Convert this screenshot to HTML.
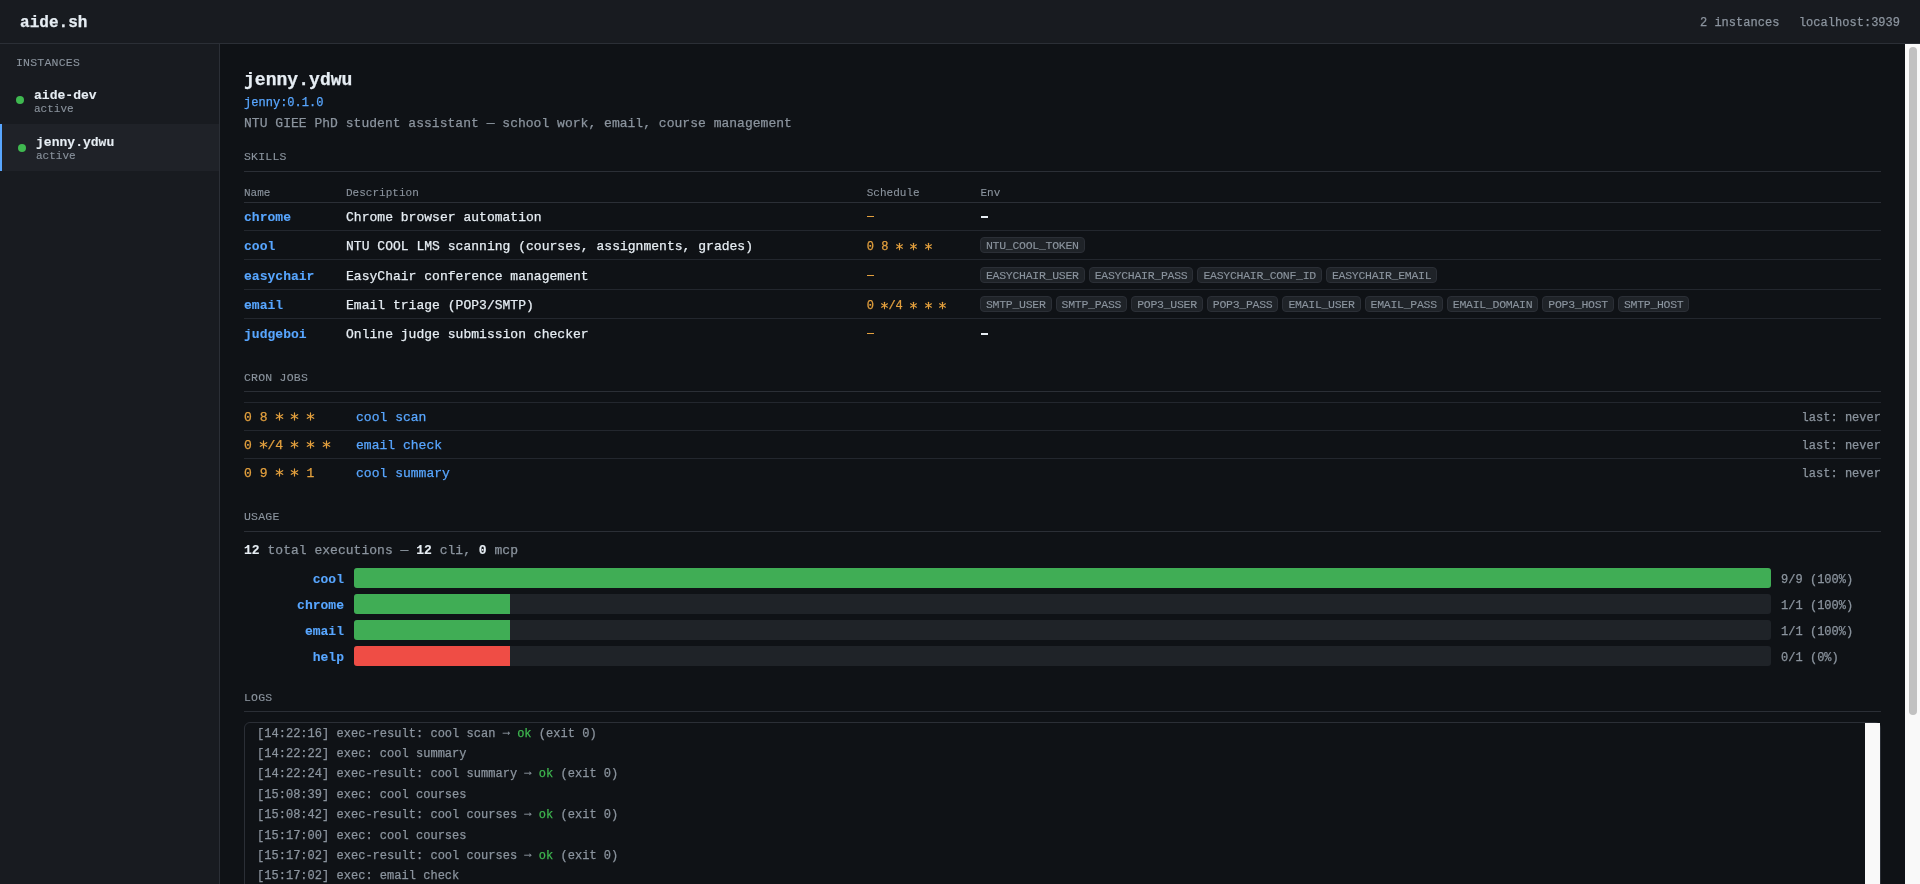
<!DOCTYPE html>
<html><head><meta charset="utf-8">
<style>
*{box-sizing:border-box;margin:0;padding:0}
html,body{width:1920px;height:884px;overflow:hidden;background:#0f1216;color:#e6edf3;font-family:"Liberation Mono",monospace;}
#w{position:absolute;left:0;top:0;width:1920px;height:884px;overflow:hidden;will-change:transform}
.t{position:absolute;white-space:pre;}
.r{position:absolute;}
.ha{color:transparent;-webkit-text-stroke-color:transparent}
.tag{position:absolute;height:16px;border:1px solid #2b2f36;border-radius:4px;background:#1f2328;}
b{font-weight:bold}
</style></head><body><div id="w">
<div class="r" style="left:0px;top:0px;width:1920px;height:43px;background:#181b20;"></div>
<div class="r" style="left:0px;top:43px;width:1920px;height:1px;background:#2b2f36;"></div>
<div class="t" style="top:15px;font-size:16.00px;line-height:16px;letter-spacing:0.031px;color:#e6edf3;-webkit-text-stroke:0.25px #e6edf3;font-weight:bold;left:20px;">aide.sh</div>
<div class="t" style="top:17px;font-size:12.00px;line-height:12px;letter-spacing:0.024px;color:#8b949e;-webkit-text-stroke:0.25px #8b949e;right:140.58px;">2 instances</div>
<div class="t" style="top:17px;font-size:12.00px;line-height:12px;letter-spacing:0.024px;color:#8b949e;-webkit-text-stroke:0.25px #8b949e;right:19.98px;">localhost:3939</div>
<div class="r" style="left:0px;top:44px;width:219px;height:840px;background:#181b20;"></div>
<div class="r" style="left:219px;top:44px;width:1px;height:840px;background:#2b2f36;"></div>
<div class="t" style="top:57px;font-size:11.50px;line-height:12px;letter-spacing:0.221px;color:#8b949e;-webkit-text-stroke:0.1px #8b949e;left:16px;">INSTANCES</div>
<div class="r" style="left:16px;top:96px;width:8px;height:8px;background:#3fb950;border-radius:50%;"></div>
<div class="t" style="top:89px;font-size:13.00px;line-height:13px;letter-spacing:0.026px;color:#e6edf3;-webkit-text-stroke:0.1px #e6edf3;font-weight:bold;left:34px;">aide-dev</div>
<div class="t" style="top:104px;font-size:11.00px;line-height:11px;letter-spacing:0.021px;color:#8b949e;-webkit-text-stroke:0.1px #8b949e;left:34px;">active</div>
<div class="r" style="left:0px;top:124px;width:219px;height:47px;background:#1f2228;"></div>
<div class="r" style="left:0px;top:124px;width:2px;height:47px;background:#58a6ff;"></div>
<div class="r" style="left:18px;top:144px;width:8px;height:8px;background:#3fb950;border-radius:50%;"></div>
<div class="t" style="top:136px;font-size:13.00px;line-height:13px;letter-spacing:0.026px;color:#e6edf3;-webkit-text-stroke:0.1px #e6edf3;font-weight:bold;left:36px;">jenny.ydwu</div>
<div class="t" style="top:151px;font-size:11.00px;line-height:11px;letter-spacing:0.021px;color:#8b949e;-webkit-text-stroke:0.1px #8b949e;left:36px;">active</div>
<div class="t" style="top:71px;font-size:18.00px;line-height:18px;letter-spacing:0.038px;color:#e6edf3;-webkit-text-stroke:0.25px #e6edf3;font-weight:bold;left:244px;">jenny.ydwu</div>
<div class="t" style="top:97px;font-size:12.00px;line-height:12px;letter-spacing:0.024px;color:#58a6ff;-webkit-text-stroke:0.25px #58a6ff;left:244px;">jenny:0.1.0</div>
<div class="t" style="top:117px;font-size:13.00px;line-height:13px;letter-spacing:0.026px;color:#8b949e;-webkit-text-stroke:0.25px #8b949e;left:244px;">NTU GIEE PhD student assistant — school work, email, course management</div>
<div class="t" style="top:151px;font-size:11.50px;line-height:12px;letter-spacing:0.221px;color:#8b949e;-webkit-text-stroke:0.1px #8b949e;left:244px;">SKILLS</div>
<div class="r" style="left:244px;top:171px;width:1637px;height:1px;background:#2b2f36;"></div>
<div class="t" style="top:188px;font-size:11.00px;line-height:11px;letter-spacing:0.021px;color:#8b949e;-webkit-text-stroke:0.1px #8b949e;left:244px;">Name</div>
<div class="t" style="top:188px;font-size:11.00px;line-height:11px;letter-spacing:0.021px;color:#8b949e;-webkit-text-stroke:0.1px #8b949e;left:346px;">Description</div>
<div class="t" style="top:188px;font-size:11.00px;line-height:11px;letter-spacing:0.021px;color:#8b949e;-webkit-text-stroke:0.1px #8b949e;left:866.7px;">Schedule</div>
<div class="t" style="top:188px;font-size:11.00px;line-height:11px;letter-spacing:0.021px;color:#8b949e;-webkit-text-stroke:0.1px #8b949e;left:980.4px;">Env</div>
<div class="r" style="left:244px;top:202px;width:1637px;height:1px;background:#2b2f36;"></div>
<div class="t" style="top:211px;font-size:13.00px;line-height:13px;letter-spacing:0.026px;color:#58a6ff;-webkit-text-stroke:0.1px #58a6ff;font-weight:bold;left:244px;">chrome</div>
<div class="t" style="top:211px;font-size:13.00px;line-height:13px;letter-spacing:0.026px;color:#e6edf3;-webkit-text-stroke:0.25px #e6edf3;left:346px;">Chrome browser automation</div>
<div class="r" style="left:866.7px;top:216px;width:7px;height:1.2px;background:#e3a03e;"></div>
<div class="r" style="left:980.5px;top:216px;width:7.5px;height:2px;background:#e6edf3;"></div>
<div class="r" style="left:244px;top:230px;width:1637px;height:1px;background:#23272e;"></div>
<div class="t" style="top:240px;font-size:13.00px;line-height:13px;letter-spacing:0.026px;color:#58a6ff;-webkit-text-stroke:0.1px #58a6ff;font-weight:bold;left:244px;">cool</div>
<div class="t" style="top:240px;font-size:13.00px;line-height:13px;letter-spacing:0.026px;color:#e6edf3;-webkit-text-stroke:0.25px #e6edf3;left:346px;">NTU COOL LMS scanning (courses, assignments, grades)</div>
<div class="t" style="top:241px;font-size:12.00px;line-height:12px;letter-spacing:0.024px;color:#e3a03e;-webkit-text-stroke:0.25px #e3a03e;left:866.7px;">0 8 <span class="ha">*</span> <span class="ha">*</span> <span class="ha">*</span></div>
<svg class="r" style="left:893px;top:240px" width="13" height="13" viewBox="0 0 13 13"><g stroke="#e3a03e" stroke-width="1.1" stroke-linecap="round"><line x1="6.50" y1="3.20" x2="6.50" y2="9.80"/><line x1="3.56" y1="4.80" x2="9.44" y2="8.20"/><line x1="9.44" y1="4.80" x2="3.56" y2="8.20"/></g></svg>
<svg class="r" style="left:907px;top:240px" width="13" height="13" viewBox="0 0 13 13"><g stroke="#e3a03e" stroke-width="1.1" stroke-linecap="round"><line x1="6.50" y1="3.20" x2="6.50" y2="9.80"/><line x1="3.56" y1="4.80" x2="9.44" y2="8.20"/><line x1="9.44" y1="4.80" x2="3.56" y2="8.20"/></g></svg>
<svg class="r" style="left:922px;top:240px" width="13" height="13" viewBox="0 0 13 13"><g stroke="#e3a03e" stroke-width="1.1" stroke-linecap="round"><line x1="6.50" y1="3.20" x2="6.50" y2="9.80"/><line x1="3.56" y1="4.80" x2="9.44" y2="8.20"/><line x1="9.44" y1="4.80" x2="3.56" y2="8.20"/></g></svg>
<div class="tag" style="left:980.00px;top:237px;width:104.71px;"></div>
<div class="t" style="top:240px;font-size:11.50px;line-height:12px;letter-spacing:-0.279px;color:#8b949e;-webkit-text-stroke:0.1px #8b949e;left:986px;">NTU_COOL_TOKEN</div>
<div class="r" style="left:244px;top:259px;width:1637px;height:1px;background:#23272e;"></div>
<div class="t" style="top:269.5px;font-size:13.00px;line-height:13px;letter-spacing:0.026px;color:#58a6ff;-webkit-text-stroke:0.1px #58a6ff;font-weight:bold;left:244px;">easychair</div>
<div class="t" style="top:269.5px;font-size:13.00px;line-height:13px;letter-spacing:0.026px;color:#e6edf3;-webkit-text-stroke:0.25px #e6edf3;left:346px;">EasyChair conference management</div>
<div class="r" style="left:866.7px;top:274.5px;width:7px;height:1.2px;background:#e3a03e;"></div>
<div class="tag" style="left:980.00px;top:266.5px;width:104.71px;"></div>
<div class="t" style="top:269.5px;font-size:11.50px;line-height:12px;letter-spacing:-0.279px;color:#8b949e;-webkit-text-stroke:0.1px #8b949e;left:986px;">EASYCHAIR_USER</div>
<div class="tag" style="left:1088.71px;top:266.5px;width:104.71px;"></div>
<div class="t" style="top:269.5px;font-size:11.50px;line-height:12px;letter-spacing:-0.279px;color:#8b949e;-webkit-text-stroke:0.1px #8b949e;left:1094.708px;">EASYCHAIR_PASS</div>
<div class="tag" style="left:1197.42px;top:266.5px;width:124.57px;"></div>
<div class="t" style="top:269.5px;font-size:11.50px;line-height:12px;letter-spacing:-0.279px;color:#8b949e;-webkit-text-stroke:0.1px #8b949e;left:1203.4160000000002px;">EASYCHAIR_CONF_ID</div>
<div class="tag" style="left:1325.99px;top:266.5px;width:111.33px;"></div>
<div class="t" style="top:269.5px;font-size:11.50px;line-height:12px;letter-spacing:-0.279px;color:#8b949e;-webkit-text-stroke:0.1px #8b949e;left:1331.9900000000002px;">EASYCHAIR_EMAIL</div>
<div class="r" style="left:244px;top:289px;width:1637px;height:1px;background:#23272e;"></div>
<div class="t" style="top:299px;font-size:13.00px;line-height:13px;letter-spacing:0.026px;color:#58a6ff;-webkit-text-stroke:0.1px #58a6ff;font-weight:bold;left:244px;">email</div>
<div class="t" style="top:299px;font-size:13.00px;line-height:13px;letter-spacing:0.026px;color:#e6edf3;-webkit-text-stroke:0.25px #e6edf3;left:346px;">Email triage (POP3/SMTP)</div>
<div class="t" style="top:300px;font-size:12.00px;line-height:12px;letter-spacing:0.024px;color:#e3a03e;-webkit-text-stroke:0.25px #e3a03e;left:866.7px;">0 <span class="ha">*</span>/4 <span class="ha">*</span> <span class="ha">*</span> <span class="ha">*</span></div>
<svg class="r" style="left:878px;top:299px" width="13" height="13" viewBox="0 0 13 13"><g stroke="#e3a03e" stroke-width="1.1" stroke-linecap="round"><line x1="6.50" y1="3.20" x2="6.50" y2="9.80"/><line x1="3.56" y1="4.80" x2="9.44" y2="8.20"/><line x1="9.44" y1="4.80" x2="3.56" y2="8.20"/></g></svg>
<svg class="r" style="left:907px;top:299px" width="13" height="13" viewBox="0 0 13 13"><g stroke="#e3a03e" stroke-width="1.1" stroke-linecap="round"><line x1="6.50" y1="3.20" x2="6.50" y2="9.80"/><line x1="3.56" y1="4.80" x2="9.44" y2="8.20"/><line x1="9.44" y1="4.80" x2="3.56" y2="8.20"/></g></svg>
<svg class="r" style="left:922px;top:299px" width="13" height="13" viewBox="0 0 13 13"><g stroke="#e3a03e" stroke-width="1.1" stroke-linecap="round"><line x1="6.50" y1="3.20" x2="6.50" y2="9.80"/><line x1="3.56" y1="4.80" x2="9.44" y2="8.20"/><line x1="9.44" y1="4.80" x2="3.56" y2="8.20"/></g></svg>
<svg class="r" style="left:936px;top:299px" width="13" height="13" viewBox="0 0 13 13"><g stroke="#e3a03e" stroke-width="1.1" stroke-linecap="round"><line x1="6.50" y1="3.20" x2="6.50" y2="9.80"/><line x1="3.56" y1="4.80" x2="9.44" y2="8.20"/><line x1="9.44" y1="4.80" x2="3.56" y2="8.20"/></g></svg>
<div class="tag" style="left:980.00px;top:296px;width:71.60px;"></div>
<div class="t" style="top:299px;font-size:11.50px;line-height:12px;letter-spacing:-0.279px;color:#8b949e;-webkit-text-stroke:0.1px #8b949e;left:986px;">SMTP_USER</div>
<div class="tag" style="left:1055.60px;top:296px;width:71.60px;"></div>
<div class="t" style="top:299px;font-size:11.50px;line-height:12px;letter-spacing:-0.279px;color:#8b949e;-webkit-text-stroke:0.1px #8b949e;left:1061.598px;">SMTP_PASS</div>
<div class="tag" style="left:1131.20px;top:296px;width:71.60px;"></div>
<div class="t" style="top:299px;font-size:11.50px;line-height:12px;letter-spacing:-0.279px;color:#8b949e;-webkit-text-stroke:0.1px #8b949e;left:1137.196px;">POP3_USER</div>
<div class="tag" style="left:1206.79px;top:296px;width:71.60px;"></div>
<div class="t" style="top:299px;font-size:11.50px;line-height:12px;letter-spacing:-0.279px;color:#8b949e;-webkit-text-stroke:0.1px #8b949e;left:1212.7939999999999px;">POP3_PASS</div>
<div class="tag" style="left:1282.39px;top:296px;width:78.22px;"></div>
<div class="t" style="top:299px;font-size:11.50px;line-height:12px;letter-spacing:-0.279px;color:#8b949e;-webkit-text-stroke:0.1px #8b949e;left:1288.3919999999998px;">EMAIL_USER</div>
<div class="tag" style="left:1364.61px;top:296px;width:78.22px;"></div>
<div class="t" style="top:299px;font-size:11.50px;line-height:12px;letter-spacing:-0.279px;color:#8b949e;-webkit-text-stroke:0.1px #8b949e;left:1370.6119999999999px;">EMAIL_PASS</div>
<div class="tag" style="left:1446.83px;top:296px;width:91.46px;"></div>
<div class="t" style="top:299px;font-size:11.50px;line-height:12px;letter-spacing:-0.279px;color:#8b949e;-webkit-text-stroke:0.1px #8b949e;left:1452.8319999999999px;">EMAIL_DOMAIN</div>
<div class="tag" style="left:1542.30px;top:296px;width:71.60px;"></div>
<div class="t" style="top:299px;font-size:11.50px;line-height:12px;letter-spacing:-0.279px;color:#8b949e;-webkit-text-stroke:0.1px #8b949e;left:1548.2959999999998px;">POP3_HOST</div>
<div class="tag" style="left:1617.89px;top:296px;width:71.60px;"></div>
<div class="t" style="top:299px;font-size:11.50px;line-height:12px;letter-spacing:-0.279px;color:#8b949e;-webkit-text-stroke:0.1px #8b949e;left:1623.8939999999998px;">SMTP_HOST</div>
<div class="r" style="left:244px;top:318px;width:1637px;height:1px;background:#23272e;"></div>
<div class="t" style="top:328px;font-size:13.00px;line-height:13px;letter-spacing:0.026px;color:#58a6ff;-webkit-text-stroke:0.1px #58a6ff;font-weight:bold;left:244px;">judgeboi</div>
<div class="t" style="top:328px;font-size:13.00px;line-height:13px;letter-spacing:0.026px;color:#e6edf3;-webkit-text-stroke:0.25px #e6edf3;left:346px;">Online judge submission checker</div>
<div class="r" style="left:866.7px;top:333px;width:7px;height:1.2px;background:#e3a03e;"></div>
<div class="r" style="left:980.5px;top:333px;width:7.5px;height:2px;background:#e6edf3;"></div>
<div class="t" style="top:372px;font-size:11.50px;line-height:12px;letter-spacing:0.221px;color:#8b949e;-webkit-text-stroke:0.1px #8b949e;left:244px;">CRON JOBS</div>
<div class="r" style="left:244px;top:391px;width:1637px;height:1px;background:#2b2f36;"></div>
<div class="r" style="left:244px;top:402px;width:1637px;height:1px;background:#23272e;"></div>
<div class="t" style="top:411px;font-size:13.00px;line-height:13px;letter-spacing:0.026px;color:#e3a03e;-webkit-text-stroke:0.25px #e3a03e;left:244px;">0 8 <span class="ha">*</span> <span class="ha">*</span> <span class="ha">*</span></div>
<svg class="r" style="left:273px;top:410px" width="13" height="13" viewBox="0 0 13 13"><g stroke="#e3a03e" stroke-width="1.1916666666666667" stroke-linecap="round"><line x1="6.50" y1="2.93" x2="6.50" y2="10.07"/><line x1="3.31" y1="4.66" x2="9.69" y2="8.34"/><line x1="9.69" y1="4.66" x2="3.31" y2="8.34"/></g></svg>
<svg class="r" style="left:288px;top:410px" width="13" height="13" viewBox="0 0 13 13"><g stroke="#e3a03e" stroke-width="1.1916666666666667" stroke-linecap="round"><line x1="6.50" y1="2.93" x2="6.50" y2="10.07"/><line x1="3.31" y1="4.66" x2="9.69" y2="8.34"/><line x1="9.69" y1="4.66" x2="3.31" y2="8.34"/></g></svg>
<svg class="r" style="left:304px;top:410px" width="13" height="13" viewBox="0 0 13 13"><g stroke="#e3a03e" stroke-width="1.1916666666666667" stroke-linecap="round"><line x1="6.50" y1="2.93" x2="6.50" y2="10.07"/><line x1="3.31" y1="4.66" x2="9.69" y2="8.34"/><line x1="9.69" y1="4.66" x2="3.31" y2="8.34"/></g></svg>
<div class="t" style="top:411px;font-size:13.00px;line-height:13px;letter-spacing:0.026px;color:#58a6ff;-webkit-text-stroke:0.25px #58a6ff;left:356px;">cool scan</div>
<div class="t" style="top:412px;font-size:12.00px;line-height:12px;letter-spacing:0.024px;color:#8b949e;-webkit-text-stroke:0.25px #8b949e;right:38.98px;">last: never</div>
<div class="r" style="left:244px;top:430px;width:1637px;height:1px;background:#23272e;"></div>
<div class="t" style="top:439px;font-size:13.00px;line-height:13px;letter-spacing:0.026px;color:#e3a03e;-webkit-text-stroke:0.25px #e3a03e;left:244px;">0 <span class="ha">*</span>/4 <span class="ha">*</span> <span class="ha">*</span> <span class="ha">*</span></div>
<svg class="r" style="left:257px;top:438px" width="13" height="13" viewBox="0 0 13 13"><g stroke="#e3a03e" stroke-width="1.1916666666666667" stroke-linecap="round"><line x1="6.50" y1="2.93" x2="6.50" y2="10.07"/><line x1="3.31" y1="4.66" x2="9.69" y2="8.34"/><line x1="9.69" y1="4.66" x2="3.31" y2="8.34"/></g></svg>
<svg class="r" style="left:288px;top:438px" width="13" height="13" viewBox="0 0 13 13"><g stroke="#e3a03e" stroke-width="1.1916666666666667" stroke-linecap="round"><line x1="6.50" y1="2.93" x2="6.50" y2="10.07"/><line x1="3.31" y1="4.66" x2="9.69" y2="8.34"/><line x1="9.69" y1="4.66" x2="3.31" y2="8.34"/></g></svg>
<svg class="r" style="left:304px;top:438px" width="13" height="13" viewBox="0 0 13 13"><g stroke="#e3a03e" stroke-width="1.1916666666666667" stroke-linecap="round"><line x1="6.50" y1="2.93" x2="6.50" y2="10.07"/><line x1="3.31" y1="4.66" x2="9.69" y2="8.34"/><line x1="9.69" y1="4.66" x2="3.31" y2="8.34"/></g></svg>
<svg class="r" style="left:320px;top:438px" width="13" height="13" viewBox="0 0 13 13"><g stroke="#e3a03e" stroke-width="1.1916666666666667" stroke-linecap="round"><line x1="6.50" y1="2.93" x2="6.50" y2="10.07"/><line x1="3.31" y1="4.66" x2="9.69" y2="8.34"/><line x1="9.69" y1="4.66" x2="3.31" y2="8.34"/></g></svg>
<div class="t" style="top:439px;font-size:13.00px;line-height:13px;letter-spacing:0.026px;color:#58a6ff;-webkit-text-stroke:0.25px #58a6ff;left:356px;">email check</div>
<div class="t" style="top:440px;font-size:12.00px;line-height:12px;letter-spacing:0.024px;color:#8b949e;-webkit-text-stroke:0.25px #8b949e;right:38.98px;">last: never</div>
<div class="r" style="left:244px;top:458px;width:1637px;height:1px;background:#23272e;"></div>
<div class="t" style="top:467px;font-size:13.00px;line-height:13px;letter-spacing:0.026px;color:#e3a03e;-webkit-text-stroke:0.25px #e3a03e;left:244px;">0 9 <span class="ha">*</span> <span class="ha">*</span> 1</div>
<svg class="r" style="left:273px;top:466px" width="13" height="13" viewBox="0 0 13 13"><g stroke="#e3a03e" stroke-width="1.1916666666666667" stroke-linecap="round"><line x1="6.50" y1="2.93" x2="6.50" y2="10.07"/><line x1="3.31" y1="4.66" x2="9.69" y2="8.34"/><line x1="9.69" y1="4.66" x2="3.31" y2="8.34"/></g></svg>
<svg class="r" style="left:288px;top:466px" width="13" height="13" viewBox="0 0 13 13"><g stroke="#e3a03e" stroke-width="1.1916666666666667" stroke-linecap="round"><line x1="6.50" y1="2.93" x2="6.50" y2="10.07"/><line x1="3.31" y1="4.66" x2="9.69" y2="8.34"/><line x1="9.69" y1="4.66" x2="3.31" y2="8.34"/></g></svg>
<div class="t" style="top:467px;font-size:13.00px;line-height:13px;letter-spacing:0.026px;color:#58a6ff;-webkit-text-stroke:0.25px #58a6ff;left:356px;">cool summary</div>
<div class="t" style="top:468px;font-size:12.00px;line-height:12px;letter-spacing:0.024px;color:#8b949e;-webkit-text-stroke:0.25px #8b949e;right:38.98px;">last: never</div>
<div class="t" style="top:511px;font-size:11.50px;line-height:12px;letter-spacing:0.221px;color:#8b949e;-webkit-text-stroke:0.1px #8b949e;left:244px;">USAGE</div>
<div class="r" style="left:244px;top:531px;width:1637px;height:1px;background:#2b2f36;"></div>
<div class="t" style="left:244px;top:544px;font-size:13px;line-height:13px;color:#8b949e;letter-spacing:0.026px;-webkit-text-stroke:0.25px #8b949e"><b style="color:#e6edf3;-webkit-text-stroke:0.1px #e6edf3">12</b> total executions — <b style="color:#e6edf3;-webkit-text-stroke:0.1px #e6edf3">12</b> cli, <b style="color:#e6edf3;-webkit-text-stroke:0.1px #e6edf3">0</b> mcp</div>
<div class="r" style="left:354px;top:568px;width:1417px;height:20px;background:#1f2328;border-radius:3px;"></div>
<div class="r" style="left:354px;top:568px;width:1417.0px;height:20px;background:#40ad55;border-radius:3px;"></div>
<div class="t" style="top:573px;font-size:13.00px;line-height:13px;letter-spacing:0.026px;color:#58a6ff;-webkit-text-stroke:0.1px #58a6ff;font-weight:bold;right:1575.97px;">cool</div>
<div class="t" style="top:574px;font-size:12.00px;line-height:12px;letter-spacing:0.024px;color:#8b949e;-webkit-text-stroke:0.25px #8b949e;left:1781px;">9/9 (100%)</div>
<div class="r" style="left:354px;top:594px;width:1417px;height:20px;background:#1f2328;border-radius:3px;"></div>
<div class="r" style="left:354px;top:594px;width:155.9px;height:20px;background:#40ad55;border-radius:3px 0 0 3px;"></div>
<div class="t" style="top:599px;font-size:13.00px;line-height:13px;letter-spacing:0.026px;color:#58a6ff;-webkit-text-stroke:0.1px #58a6ff;font-weight:bold;right:1575.97px;">chrome</div>
<div class="t" style="top:600px;font-size:12.00px;line-height:12px;letter-spacing:0.024px;color:#8b949e;-webkit-text-stroke:0.25px #8b949e;left:1781px;">1/1 (100%)</div>
<div class="r" style="left:354px;top:620px;width:1417px;height:20px;background:#1f2328;border-radius:3px;"></div>
<div class="r" style="left:354px;top:620px;width:155.9px;height:20px;background:#40ad55;border-radius:3px 0 0 3px;"></div>
<div class="t" style="top:625px;font-size:13.00px;line-height:13px;letter-spacing:0.026px;color:#58a6ff;-webkit-text-stroke:0.1px #58a6ff;font-weight:bold;right:1575.97px;">email</div>
<div class="t" style="top:626px;font-size:12.00px;line-height:12px;letter-spacing:0.024px;color:#8b949e;-webkit-text-stroke:0.25px #8b949e;left:1781px;">1/1 (100%)</div>
<div class="r" style="left:354px;top:646px;width:1417px;height:20px;background:#1f2328;border-radius:3px;"></div>
<div class="r" style="left:354px;top:646px;width:155.9px;height:20px;background:#ef4d45;border-radius:3px 0 0 3px;"></div>
<div class="t" style="top:651px;font-size:13.00px;line-height:13px;letter-spacing:0.026px;color:#58a6ff;-webkit-text-stroke:0.1px #58a6ff;font-weight:bold;right:1575.97px;">help</div>
<div class="t" style="top:652px;font-size:12.00px;line-height:12px;letter-spacing:0.024px;color:#8b949e;-webkit-text-stroke:0.25px #8b949e;left:1781px;">0/1 (0%)</div>
<div class="t" style="top:692px;font-size:11.50px;line-height:12px;letter-spacing:0.221px;color:#8b949e;-webkit-text-stroke:0.1px #8b949e;left:244px;">LOGS</div>
<div class="r" style="left:244px;top:711px;width:1637px;height:1px;background:#2b2f36;"></div>
<div class="r" style="left:244px;top:722px;width:1637px;height:200px;border:1px solid #2b2f36;border-radius:6px;"></div>
<div class="r" style="left:1865px;top:723px;width:15px;height:161px;background:#f9f9f9;"></div>
<div class="t" style="top:727.5px;font-size:12.00px;line-height:12px;letter-spacing:0.024px;color:#8b949e;-webkit-text-stroke:0.25px #8b949e;left:257px;">[14:22:16] exec-result: cool scan <span style="position:relative;top:-2px">→</span> <span style="color:#3fb950;-webkit-text-stroke-color:#3fb950">ok</span> (exit 0)</div>
<div class="t" style="top:747.9px;font-size:12.00px;line-height:12px;letter-spacing:0.024px;color:#8b949e;-webkit-text-stroke:0.25px #8b949e;left:257px;">[14:22:22] exec: cool summary</div>
<div class="t" style="top:768.3px;font-size:12.00px;line-height:12px;letter-spacing:0.024px;color:#8b949e;-webkit-text-stroke:0.25px #8b949e;left:257px;">[14:22:24] exec-result: cool summary <span style="position:relative;top:-2px">→</span> <span style="color:#3fb950;-webkit-text-stroke-color:#3fb950">ok</span> (exit 0)</div>
<div class="t" style="top:788.7px;font-size:12.00px;line-height:12px;letter-spacing:0.024px;color:#8b949e;-webkit-text-stroke:0.25px #8b949e;left:257px;">[15:08:39] exec: cool courses</div>
<div class="t" style="top:809.1px;font-size:12.00px;line-height:12px;letter-spacing:0.024px;color:#8b949e;-webkit-text-stroke:0.25px #8b949e;left:257px;">[15:08:42] exec-result: cool courses <span style="position:relative;top:-2px">→</span> <span style="color:#3fb950;-webkit-text-stroke-color:#3fb950">ok</span> (exit 0)</div>
<div class="t" style="top:829.5px;font-size:12.00px;line-height:12px;letter-spacing:0.024px;color:#8b949e;-webkit-text-stroke:0.25px #8b949e;left:257px;">[15:17:00] exec: cool courses</div>
<div class="t" style="top:849.9px;font-size:12.00px;line-height:12px;letter-spacing:0.024px;color:#8b949e;-webkit-text-stroke:0.25px #8b949e;left:257px;">[15:17:02] exec-result: cool courses <span style="position:relative;top:-2px">→</span> <span style="color:#3fb950;-webkit-text-stroke-color:#3fb950">ok</span> (exit 0)</div>
<div class="t" style="top:870.3px;font-size:12.00px;line-height:12px;letter-spacing:0.024px;color:#8b949e;-webkit-text-stroke:0.25px #8b949e;left:257px;">[15:17:02] exec: email check</div>
<div class="r" style="left:1905px;top:44px;width:15px;height:840px;background:#f9f9f9;"></div>
<div class="r" style="left:1909px;top:47px;width:8px;height:668px;background:#c1c1c1;border-radius:4px;"></div>
</div></body></html>
